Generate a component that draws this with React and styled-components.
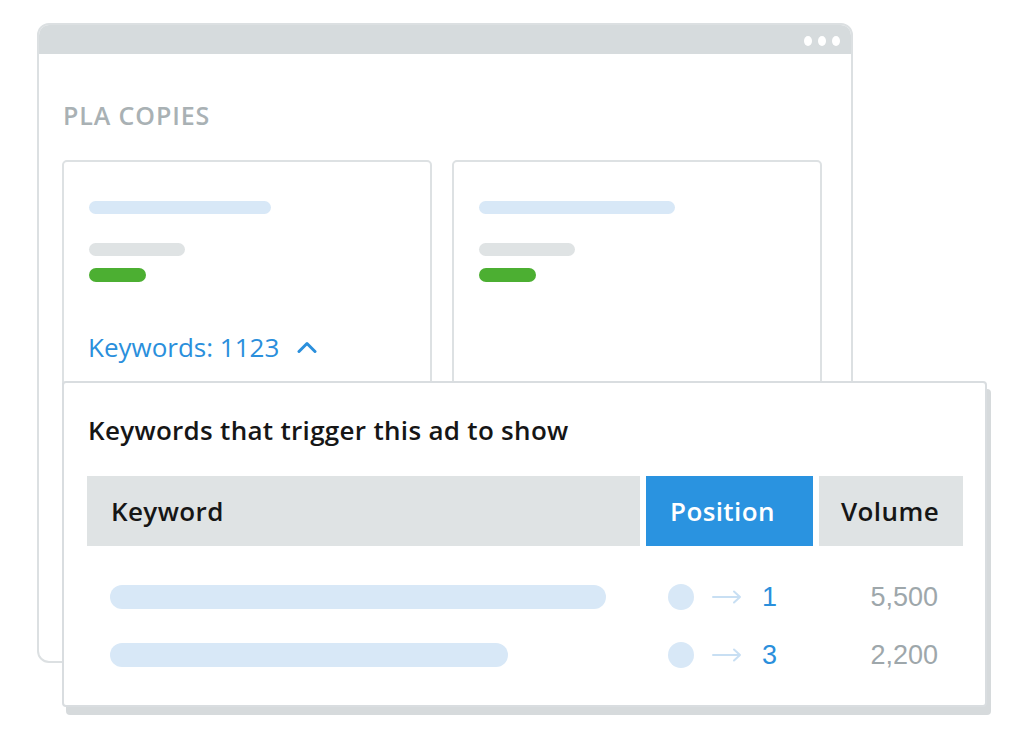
import styled, { createGlobalStyle } from "styled-components";

const GlobalStyle = createGlobalStyle`
  body {
    margin: 0;
    background: #fff;
    font-family: "Open Sans", "Noto Sans", sans-serif;
  }
`;

const Stage = styled.div`
  position: relative;
  width: 1010px;
  height: 739px;
  padding: 23px 0 0 37px;
  box-sizing: border-box;
  overflow: hidden;
`;

const BrowserWindow = styled.div`
  width: 816px;
  height: 640px;
  box-sizing: border-box;
  border: 2px solid #dce0e2;
  border-radius: 12px;
  overflow: hidden;
  display: flex;
  flex-direction: column;
`;

const TopBar = styled.div`
  height: 29px;
  flex-shrink: 0;
  background: #d6dbdd;
  display: flex;
  justify-content: flex-end;
  align-items: center;
  gap: 6px;
  padding: 2px 11px 0 0;
  box-sizing: border-box;
`;

const Dot = styled.span`
  width: 8px;
  height: 10px;
  border-radius: 50%;
  background: #fff;
`;

const WindowBody = styled.div`
  padding: 0 29px 0 23px;
`;

const SectionTitle = styled.h2`
  margin: 47px 0 0 1px;
  font-size: 25px;
  line-height: 28px;
  font-weight: 600;
  color: #a9b1b4;
  letter-spacing: 0.9px;
`;

const CardGrid = styled.div`
  display: grid;
  grid-template-columns: 370px 370px;
  gap: 20px;
  margin-top: 31px;
`;

const Card = styled.div`
  height: 260px;
  box-sizing: border-box;
  border: 2px solid #dde1e3;
  border-radius: 5px;
  padding: 39px 25px 0;
  display: flex;
  flex-direction: column;
  align-items: flex-start;
`;

const Bar = styled.div`
  width: ${(p) => p.$w}px;
  height: ${(p) => p.$h || 13}px;
  margin-top: ${(p) => p.$mt || 0}px;
  border-radius: 8px;
  background: ${(p) => p.$color};
`;

const KeywordsToggle = styled.div`
  margin: 50px 0 0 -1px;
  display: flex;
  align-items: center;
  gap: 18px;
  font-size: 26px;
  line-height: 30px;
  color: #2a8fdc;
`;

const Popup = styled.div`
  position: absolute;
  left: 62px;
  top: 381px;
  width: 925px;
  height: 326px;
  box-sizing: border-box;
  background: #fff;
  border: 2px solid #d9dde0;
  border-radius: 4px;
  box-shadow: 4px 8px 0 #d6dadc;
  padding: 32px 22px 0 23px;
`;

const PopupTitle = styled.h3`
  margin: 0 0 0 1px;
  font-size: 26px;
  line-height: 30px;
  font-weight: 600;
  letter-spacing: 0.3px;
  color: #161616;
`;

const TableRow = styled.div`
  display: grid;
  grid-template-columns: 553px 167px 144px;
  gap: 6px;
  height: ${(p) => (p.$head ? 70 : 58)}px;
`;

const TableHead = styled(TableRow)`
  margin-top: 31px;
  margin-bottom: 22px;
`;

const HeadCell = styled.div`
  display: flex;
  align-items: center;
  padding-left: ${(p) => p.$pl}px;
  background: ${(p) => (p.$active ? "#2a93e0" : "#dfe3e4")};
  color: ${(p) => (p.$active ? "#fff" : "#161616")};
  font-size: 26px;
  font-weight: 600;
  letter-spacing: 0.4px;
`;

const Cell = styled.div`
  display: flex;
  align-items: center;
  padding-left: ${(p) => p.$pl || 0}px;
  padding-right: ${(p) => p.$pr || 0}px;
  justify-content: ${(p) => (p.$right ? "flex-end" : "flex-start")};
`;

const KeywordBar = styled.div`
  width: ${(p) => p.$w}px;
  height: 24px;
  border-radius: 12px;
  background: #d8e8f7;
`;

const Circle = styled.div`
  width: 26px;
  height: 26px;
  border-radius: 50%;
  background: #d8e8f7;
`;

const Num = styled.span`
  font-family: "Liberation Sans", Arial, sans-serif;
  font-size: 27px;
  color: ${(p) => (p.$blue ? "#2a8fdc" : "#9ea7ab")};
  margin-left: ${(p) => p.$ml || 0}px;
`;

const Chevron = () => (
  <svg width="20" height="12" viewBox="0 0 20 12">
    <polyline points="2,10.5 10,2.5 18,10.5" fill="none" stroke="#2a8fdc" strokeWidth="3" strokeLinecap="round" strokeLinejoin="round" />
  </svg>
);

const Arrow = () => (
  <svg width="30" height="14" viewBox="0 0 30 14" style={{ marginLeft: 18 }}>
    <path d="M1 7 H28 M22 1.5 L28 7 L22 12.5" fill="none" stroke="#c8dff3" strokeWidth="2" strokeLinecap="round" strokeLinejoin="round" />
  </svg>
);

const cards = [
  { blue: 182, toggle: true },
  { blue: 196, toggle: false },
];

const rows = [
  { bar: 496, pos: 1, volume: "5,500" },
  { bar: 398, pos: 3, volume: "2,200" },
];

export default function App() {
  return (
    <Stage>
      <GlobalStyle />
      <BrowserWindow>
        <TopBar>
          <Dot />
          <Dot />
          <Dot />
        </TopBar>
        <WindowBody>
          <SectionTitle>PLA COPIES</SectionTitle>
          <CardGrid>
            {cards.map((c, i) => (
              <Card key={i}>
                <Bar $w={c.blue} $color="#d8e8f7" />
                <Bar $w={96} $mt={29} $color="#dfe3e4" />
                <Bar $w={57} $h={14} $mt={12} $color="#4caf32" />
                {c.toggle && (
                  <KeywordsToggle>
                    Keywords: 1123
                    <Chevron />
                  </KeywordsToggle>
                )}
              </Card>
            ))}
          </CardGrid>
        </WindowBody>
      </BrowserWindow>

      <Popup>
        <PopupTitle>Keywords that trigger this ad to show</PopupTitle>
        <TableHead $head>
          <HeadCell $pl={24}>Keyword</HeadCell>
          <HeadCell $pl={24} $active>Position</HeadCell>
          <HeadCell $pl={22}>Volume</HeadCell>
        </TableHead>
        {rows.map((r) => (
          <TableRow key={r.pos}>
            <Cell $pl={23}>
              <KeywordBar $w={r.bar} />
            </Cell>
            <Cell $pl={22}>
              <Circle />
              <Arrow />
              <Num $blue $ml={20}>{r.pos}</Num>
            </Cell>
            <Cell $right $pr={25}>
              <Num>{r.volume}</Num>
            </Cell>
          </TableRow>
        ))}
      </Popup>
    </Stage>
  );
}
